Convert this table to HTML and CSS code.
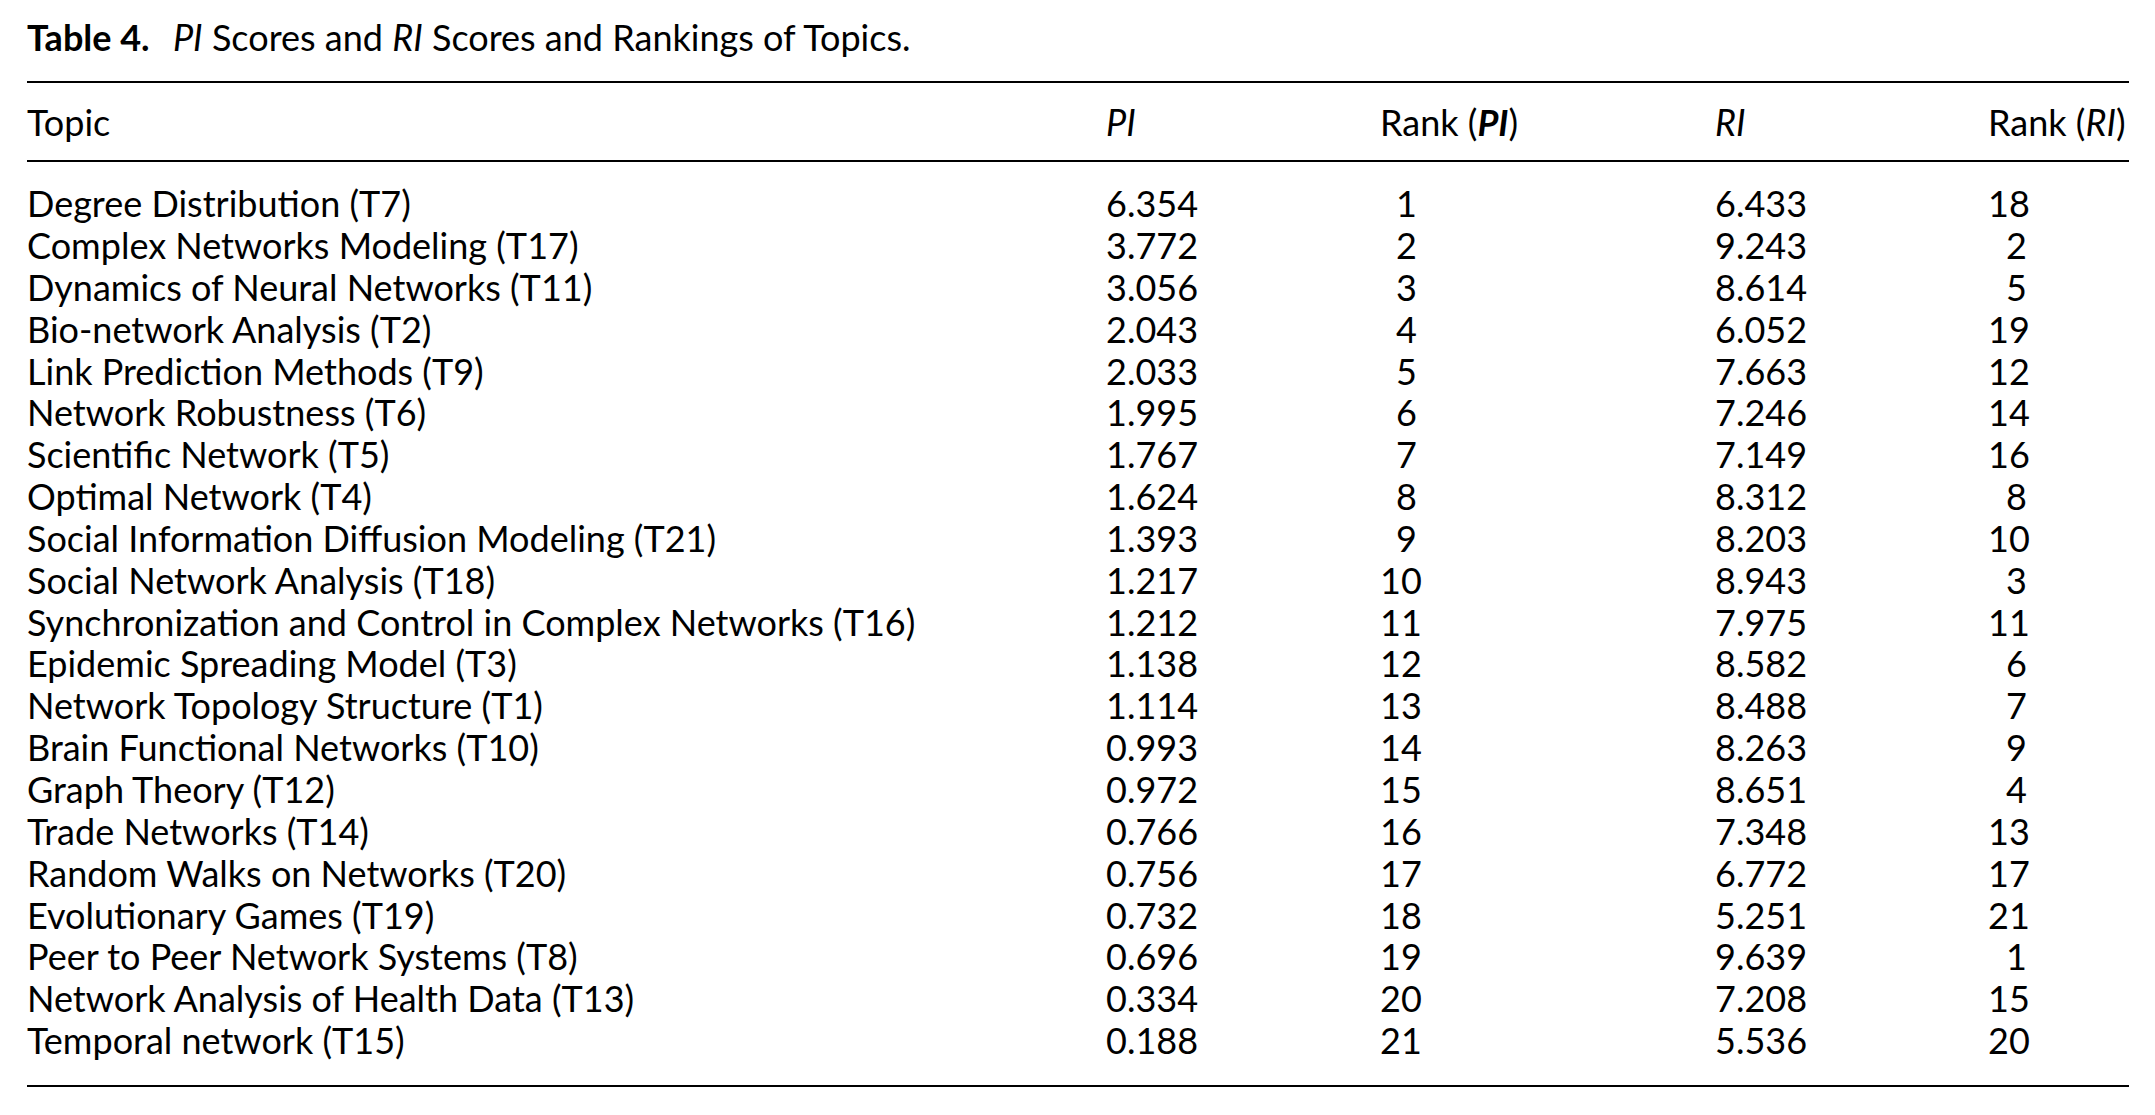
FILE: index.html
```html
<!DOCTYPE html>
<html lang="en">
<head>
<meta charset="utf-8">
<title>Table 4. PI Scores and RI Scores and Rankings of Topics</title>
<link rel="stylesheet" href="styles.css">
</head>
<body>
<div class="page">
  <p class="caption"><b class="label">Table 4.</b> <i>PI</i> Scores and <i>RI</i> Scores and Rankings of Topics.</p>
  <div class="table">
    <div class="head row">
      <div>Topic</div>
      <div><i>PI</i></div>
      <div>Rank (<b><i>PI</i></b>)</div>
      <div><i>RI</i></div>
      <div>Rank (<i>RI</i>)</div>
    </div>
    <div class="body">
      <div class="row"><div>Degree Distribution (T7)</div><div>6.354</div><div class="rank rp"><span>1</span></div><div>6.433</div><div class="rank rr"><span>18</span></div></div>
      <div class="row"><div>Complex Networks Modeling (T17)</div><div>3.772</div><div class="rank rp"><span>2</span></div><div>9.243</div><div class="rank rr"><span>2</span></div></div>
      <div class="row"><div>Dynamics of Neural Networks (T11)</div><div>3.056</div><div class="rank rp"><span>3</span></div><div>8.614</div><div class="rank rr"><span>5</span></div></div>
      <div class="row"><div>Bio-network Analysis (T2)</div><div>2.043</div><div class="rank rp"><span>4</span></div><div>6.052</div><div class="rank rr"><span>19</span></div></div>
      <div class="row"><div>Link Prediction Methods (T9)</div><div>2.033</div><div class="rank rp"><span>5</span></div><div>7.663</div><div class="rank rr"><span>12</span></div></div>
      <div class="row"><div>Network Robustness (T6)</div><div>1.995</div><div class="rank rp"><span>6</span></div><div>7.246</div><div class="rank rr"><span>14</span></div></div>
      <div class="row"><div>Scientific Network (T5)</div><div>1.767</div><div class="rank rp"><span>7</span></div><div>7.149</div><div class="rank rr"><span>16</span></div></div>
      <div class="row"><div>Optimal Network (T4)</div><div>1.624</div><div class="rank rp"><span>8</span></div><div>8.312</div><div class="rank rr"><span>8</span></div></div>
      <div class="row"><div>Social Information Diffusion Modeling (T21)</div><div>1.393</div><div class="rank rp"><span>9</span></div><div>8.203</div><div class="rank rr"><span>10</span></div></div>
      <div class="row"><div>Social Network Analysis (T18)</div><div>1.217</div><div class="rank rp"><span>10</span></div><div>8.943</div><div class="rank rr"><span>3</span></div></div>
      <div class="row"><div>Synchronization and Control in Complex Networks (T16)</div><div>1.212</div><div class="rank rp"><span>11</span></div><div>7.975</div><div class="rank rr"><span>11</span></div></div>
      <div class="row"><div>Epidemic Spreading Model (T3)</div><div>1.138</div><div class="rank rp"><span>12</span></div><div>8.582</div><div class="rank rr"><span>6</span></div></div>
      <div class="row"><div>Network Topology Structure (T1)</div><div>1.114</div><div class="rank rp"><span>13</span></div><div>8.488</div><div class="rank rr"><span>7</span></div></div>
      <div class="row"><div>Brain Functional Networks (T10)</div><div>0.993</div><div class="rank rp"><span>14</span></div><div>8.263</div><div class="rank rr"><span>9</span></div></div>
      <div class="row"><div>Graph Theory (T12)</div><div>0.972</div><div class="rank rp"><span>15</span></div><div>8.651</div><div class="rank rr"><span>4</span></div></div>
      <div class="row"><div>Trade Networks (T14)</div><div>0.766</div><div class="rank rp"><span>16</span></div><div>7.348</div><div class="rank rr"><span>13</span></div></div>
      <div class="row"><div>Random Walks on Networks (T20)</div><div>0.756</div><div class="rank rp"><span>17</span></div><div>6.772</div><div class="rank rr"><span>17</span></div></div>
      <div class="row"><div>Evolutionary Games (T19)</div><div>0.732</div><div class="rank rp"><span>18</span></div><div>5.251</div><div class="rank rr"><span>21</span></div></div>
      <div class="row"><div>Peer to Peer Network Systems (T8)</div><div>0.696</div><div class="rank rp"><span>19</span></div><div>9.639</div><div class="rank rr"><span>1</span></div></div>
      <div class="row"><div>Network Analysis of Health Data (T13)</div><div>0.334</div><div class="rank rp"><span>20</span></div><div>7.208</div><div class="rank rr"><span>15</span></div></div>
      <div class="row"><div>Temporal network (T15)</div><div>0.188</div><div class="rank rp"><span>21</span></div><div>5.536</div><div class="rank rr"><span>20</span></div></div>
    </div>
  </div>
</div>
</body>
</html>
```
FILE: styles.css
```css
html, body {
  margin: 0;
  padding: 0;
  background: #ffffff;
}

.page {
  padding: 0 0 0 27px;
  width: 2102px;
  font-family: Lato, "Open Sans", "Liberation Sans", sans-serif;
  font-size: 36px;
  line-height: 41.85px;
  color: #000000;
}

.caption {
  margin: 17.4px 0 0 0;
  white-space: nowrap;
}

.caption .label {
  font-weight: 700;
  margin-right: 14px;
}

.table {
  margin-top: 21.7px;
  border-top: 2.4px solid #000;
  border-bottom: 2.4px solid #000;
}

.row {
  display: grid;
  grid-template-columns: 1079px 274px 335px 273px 141px;
  white-space: nowrap;
}

.head {
  padding: 19px 0 16px 0;
  border-bottom: 2.4px solid #000;
}

.body {
  padding: 21.4px 0 23px 0;
}

.rank span {
  display: inline-block;
  text-align: right;
}

.rp span {
  width: 37px;
}

.rr span {
  width: 39px;
}
```
